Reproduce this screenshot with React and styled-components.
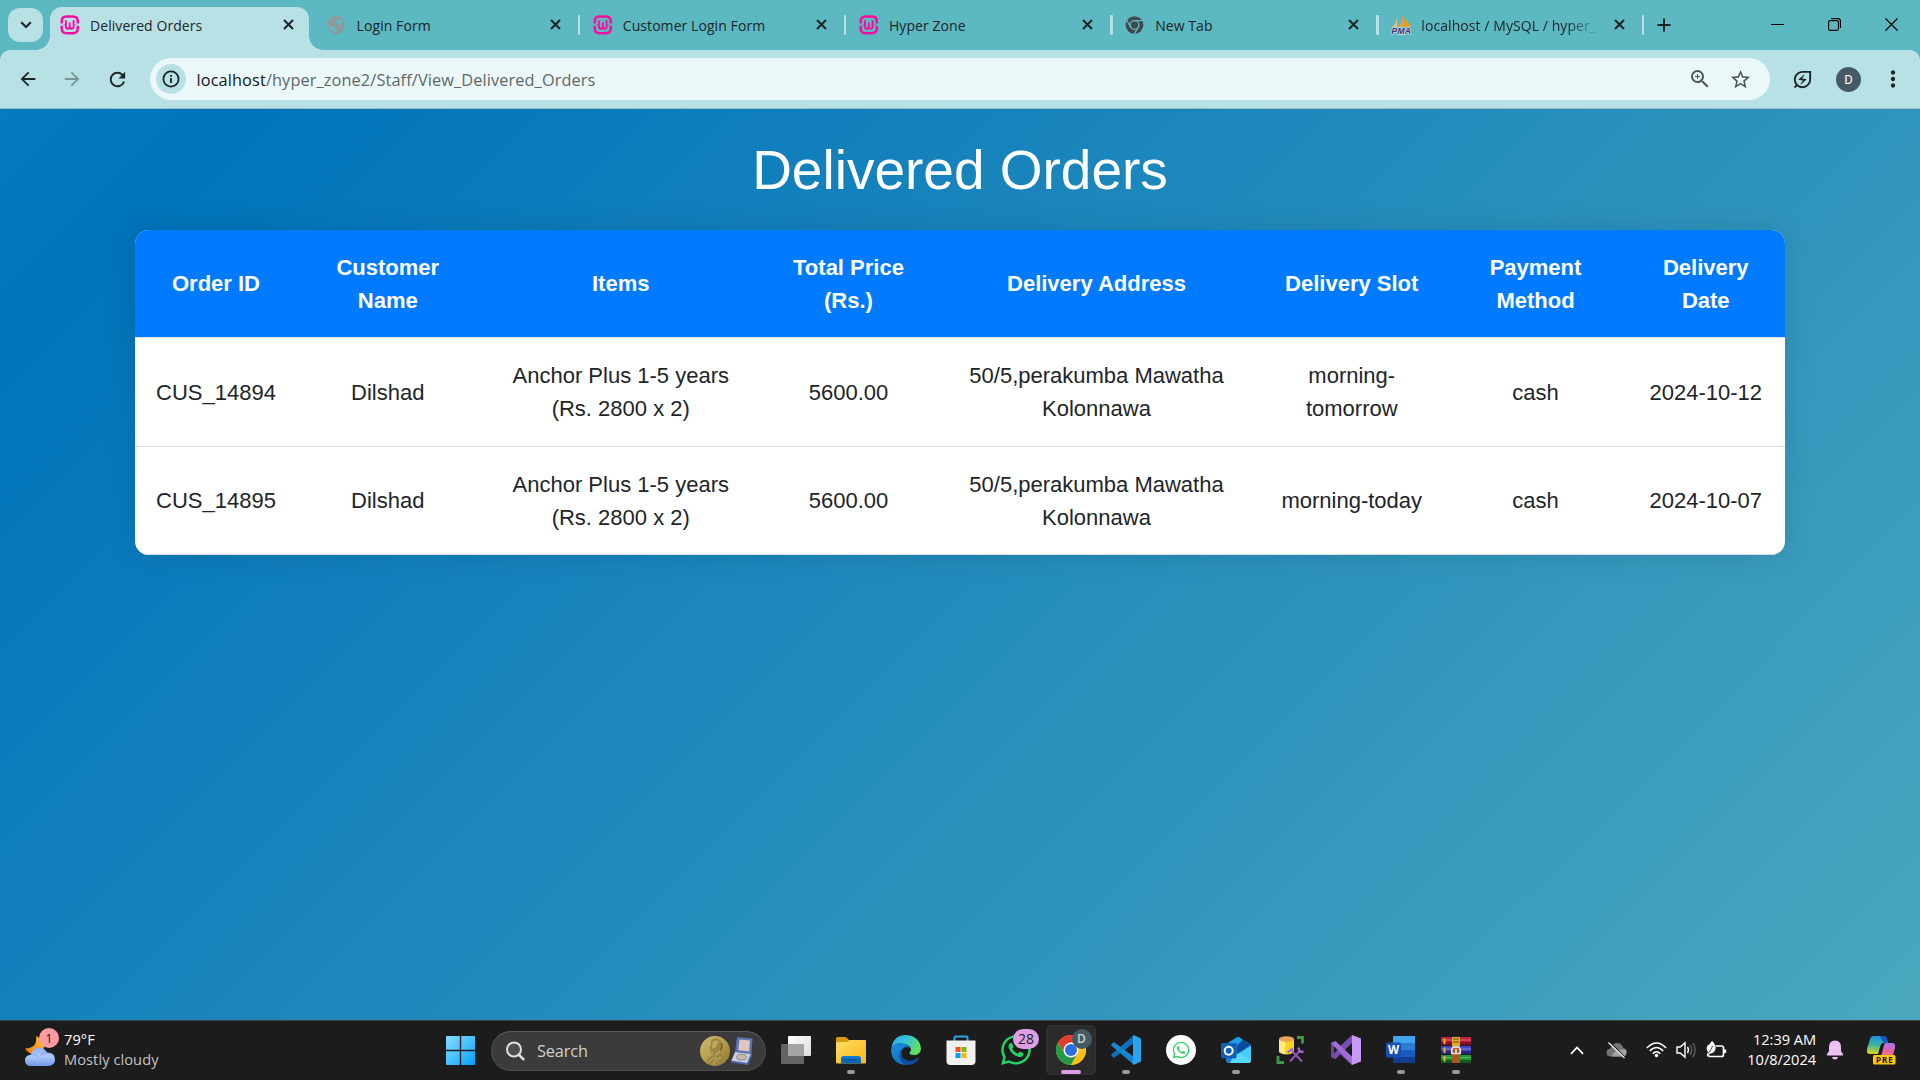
import React from "react";
import styled, { createGlobalStyle, css } from "styled-components";
import {
  MdArrowBack,
  MdArrowForward,
  MdRefresh,
  MdZoomIn,
  MdStarBorder,
  MdMoreVert,
  MdOutlineEnergySavingsLeaf,
} from "react-icons/md";
import { FaWhatsapp } from "react-icons/fa";

const strip = "#5cb8c1";
const bar = "#b8e1e5";
const ink = "#1d2426";

const Global = createGlobalStyle`
  *, *::before, *::after { box-sizing: border-box; }
  html, body { margin: 0; padding: 0; overflow: hidden; }
  svg { display: block; flex: none; }
`;

const Screen = styled.div`
  width: 1920px;
  height: 1080px;
  display: flex;
  flex-direction: column;
  overflow: hidden;
  font-family: "Open Sans", "Noto Sans", sans-serif;
`;

/* ---------- browser tab strip ---------- */

const TabStrip = styled.div`
  height: 50px;
  flex: none;
  display: flex;
  align-items: flex-start;
  background: ${strip};
`;

const TabSearch = styled.div`
  width: 35px;
  height: 34px;
  margin: 8px 3px 0 8px;
  border-radius: 12px;
  background: ${bar};
  display: flex;
  align-items: center;
  justify-content: center;
`;

const Tab = styled.div`
  position: relative;
  width: ${(p) => p.$width || 266.2}px;
  height: 50px;
  padding-left: 14px;
  display: flex;
  align-items: center;
  flex: none;
  ${(p) =>
    p.$active &&
    css`
      &::before {
        content: "";
        position: absolute;
        left: 4px;
        right: 4px;
        top: 7px;
        bottom: 0;
        background: ${bar};
        border-radius: 12px 12px 0 0;
      }
      &::after {
        content: "";
        position: absolute;
        left: -10px;
        right: -10px;
        bottom: 0;
        height: 14px;
        background:
          radial-gradient(circle at 0 0, transparent 13.5px, ${bar} 14px) left / 14px 14px no-repeat,
          radial-gradient(circle at 100% 0, transparent 13.5px, ${bar} 14px) right / 14px 14px no-repeat;
      }
    `}
`;

const TabBody = styled.div`
  position: relative;
  z-index: 1;
  display: flex;
  align-items: center;
  width: 100%;
  height: 36px;
  margin-bottom: 1px;
`;

const Favicon = styled.div`
  width: 20px;
  margin-right: 10px;
  display: flex;
  align-items: center;
`;

const TabTitle = styled.div`
  width: 176px;
  overflow: hidden;
  white-space: nowrap;
  font-size: 14px;
  line-height: 22px;
  letter-spacing: 0.07px;
  color: ${ink};
  margin-top: 3px;
  ${(p) => p.$fade && css`mask-image: linear-gradient(90deg, #000 146px, transparent 178px);`}
`;

const TabClose = styled.div`
  width: 20px;
  margin-left: 12.5px;
  display: flex;
  justify-content: center;
`;

const TabRule = styled.div`
  width: 2.5px;
  height: 20px;
  border-radius: 1px;
  background: ${bar};
  margin-left: auto;
  margin-right: -1.5px;
  flex: none;
`;

const NewTab = styled.div`
  width: 42px;
  height: 49px;
  display: flex;
  align-items: center;
  justify-content: center;
`;

const WindowControls = styled.div`
  margin-left: auto;
  width: 171px;
  height: 49px;
  display: flex;
  align-items: center;
`;

const WindowButton = styled.div`
  width: 57px;
  display: flex;
  justify-content: center;
`;

/* ---------- browser toolbar ---------- */

const ToolbarBack = styled.div`
  flex: none;
  background: ${strip};
`;

const Toolbar = styled.div`
  height: 59px;
  padding-left: 17px;
  border-bottom: 1px solid #9bbcc3;
  border-radius: 10px 10px 0 0;
  background: ${bar};
  display: flex;
  align-items: center;
`;

const NavButton = styled.div`
  width: 22px;
  margin-right: ${(p) => p.$gap || 0}px;
  display: flex;
  color: ${ink};
  opacity: ${(p) => (p.$dim ? 0.4 : 1)};
`;

const Omnibox = styled.div`
  width: 1620px;
  height: 42px;
  border-radius: 21px;
  padding: 0 18.5px 0 6px;
  background: #ebf7f8;
  display: flex;
  align-items: center;
  flex: none;
`;

const SiteInfo = styled.div`
  width: 30px;
  height: 30px;
  border-radius: 50%;
  background: ${bar};
  display: flex;
  align-items: center;
  justify-content: center;
`;

const Url = styled.div`
  margin-left: 10.5px;
  font-size: 16.3px;
  line-height: 24px;
  letter-spacing: 0.13px;
  color: #5d6769;
  flex: 1;
  margin-top: 1px;
  b {
    font-weight: 400;
    color: #10181a;
  }
`;

const OmniIcon = styled.div`
  display: flex;
  margin-left: ${(p) => p.$gap || 0}px;
  color: #4b5658;
`;

const ToolIcon = styled.div`
  display: flex;
  margin-left: ${(p) => p.$gap}px;
  color: ${ink};
`;

const Avatar = styled.div`
  width: 25px;
  height: 25px;
  margin-left: 22px;
  border-radius: 50%;
  background: #455a64;
  color: #fff;
  font: 400 13px/25px Roboto, sans-serif;
  text-align: center;
`;

/* ---------- page ---------- */

const Page = styled.main`
  flex: 1;
  padding-top: 27.5px;
  background: linear-gradient(135deg, #067bbf, #0073bb 8%, #4aa7bd);
  font-family: "Liberation Sans", Arial, sans-serif;
`;

const Container = styled.div`
  width: 1650px;
  margin: 0 auto;
`;

const Heading = styled.h1`
  margin: 0 0 27.5px;
  font-size: 55px;
  font-weight: 400;
  line-height: 66px;
  text-align: center;
  color: #fff;
`;

const Card = styled.div`
  border-radius: 13.75px;
  overflow: hidden;
  background: #fff;
  box-shadow: 0 0 30px rgba(0, 0, 0, 0.11);
`;

const Table = styled.table`
  width: 1650px;
  table-layout: fixed;
  border-collapse: separate;
  border-spacing: 0;
  font-size: 22px;
  line-height: 33px;
  text-align: center;
  color: #212529;
  th,
  td {
    padding: 20.5px 20px 20.5px 21px;
    border-bottom: 1px solid #ddd;
    vertical-align: middle;
  }
  th {
    background: #007bff;
    color: #fff;
    font-weight: 700;
  }
  tbody tr:first-child td {
    padding-top: 21px;
    padding-bottom: 21px;
  }
`;

const Col = styled.col`
  width: ${(p) => p.$w}px;
`;

/* ---------- taskbar ---------- */

const Taskbar = styled.footer`
  height: 60px;
  flex: none;
  display: flex;
  align-items: center;
  background: #1c1c1c;
  border-top: 1px solid #3f4345;
`;

const Weather = styled.div`
  width: 446px;
  height: 59px;
  padding-left: 24px;
  display: flex;
  align-items: center;
`;

const WeatherIcon = styled.div`
  position: relative;
  width: 40px;
  height: 44px;
`;

const Count = styled.div`
  position: absolute;
  left: ${(p) => p.$x}px;
  top: ${(p) => p.$y}px;
  width: ${(p) => p.$w || 20}px;
  height: 20px;
  border-radius: 10px;
  background: ${(p) => p.$bg};
  color: ${(p) => p.$fg || "#1c1c1c"};
  font-size: ${(p) => p.$size || 13}px;
  font-weight: ${(p) => p.$weight || 400};
  line-height: 20px;
  text-align: center;
`;

const Lines = styled.div`
  font-size: 14.6px;
  line-height: 20px;
  letter-spacing: ${(p) => p.$ls || 0}px;
  margin-bottom: 3px;
  color: #fff;
  white-space: nowrap;
  text-align: ${(p) => p.$align || "left"};
  span {
    display: block;
  }
`;

const Muted = styled.span`
  color: #c3c3c3;
`;

const SearchBox = styled.div`
  width: 275px;
  height: 40px;
  margin: 0 2px 0 16px;
  padding: 0 12px 0 14px;
  border-radius: 20px;
  background: #3b3b3b;
  border: 1px solid #4c4c4c;
  border-top-color: #5d5d5d;
  display: flex;
  align-items: center;
`;

const SearchLabel = styled.div`
  flex: 1;
  margin-left: 12px;
  font-size: 16.3px;
  letter-spacing: -0.1px;
  color: #d0d0d0;
`;

const AppSlot = styled.div`
  position: relative;
  width: 55px;
  height: 59px;
  display: flex;
  align-items: center;
  justify-content: center;
  flex: none;
`;

const AppTile = styled.div`
  width: 50px;
  height: 50px;
  margin-bottom: 1px;
  border-radius: 5px;
  display: flex;
  align-items: center;
  justify-content: center;
  ${(p) =>
    p.$active &&
    css`
      background: #2b2b2b;
      border: 1px solid #333;
    `}
`;

const Running = styled.div`
  position: absolute;
  bottom: 6px;
  width: ${(p) => (p.$active ? 20 : 8)}px;
  height: 4px;
  border-radius: 2px;
  background: ${(p) => (p.$active ? "#dc9fe6" : "#989898")};
`;

const Tray = styled.div`
  margin-left: auto;
  height: 58px;
  margin-bottom: 1px;
  padding-right: 24px;
  display: flex;
  align-items: center;
`;

const TrayItem = styled.div`
  display: flex;
  margin-left: ${(p) => p.$gap || 0}px;
`;

/* ---------- icons ---------- */

const Wamp = () => (
  <svg width="20" height="20" viewBox="0 0 20 20" fill="none" stroke="#ff0a9e">
    <path d="M1.700 8.600V6.500Q1.700 1.500 6.500 1.500H13Q17.800 1.500 17.800 6.500V8.600M1.700 10.800V13.300Q1.700 18.200 6.500 18.200H13Q17.800 18.200 17.800 13.300V10.800" strokeWidth="2.500" />
    <path d="M5.900 5.300V11.500Q5.900 13.700 7.900 13.700Q9.750 13.700 9.750 11.500V7.500M9.750 11.500Q9.750 13.700 11.700 13.700Q13.600 13.700 13.600 11.500V5.300" strokeWidth="1.900" />
    <path d="M3 9.700H5M14.500 9.700H16.500" strokeWidth="1" opacity=".5" />
  </svg>
);

const Globe = () => (
  <svg width="19" height="20" viewBox="0 0 19 20">
    <circle cx="9" cy="10" r="8" fill="none" stroke="#91989c" strokeWidth="1.800" />
    <path d="M2 8Q4 2.500 10 2Q13 3.500 11 5.500Q8 5.500 8.500 8Q11 8 12.500 9.500Q14 11 16.500 10.500Q16 16 10 17.500Q8 17 10 14.500Q10 12.500 7 12.500Q5 10 2 10Z" fill="#91989c" />
  </svg>
);

const ChromeMono = () => (
  <svg width="19" height="20" viewBox="0 0 20 20">
    <circle cx="10" cy="10" r="9.300" fill="#41484c" />
    <circle cx="10" cy="10" r="4.600" fill="none" stroke={strip} strokeWidth="1.500" />
    <path d="M10 5.400H18.300M6 12.300L1.800 5M14 12.300L9.800 19.400" stroke={strip} strokeWidth="1.400" />
  </svg>
);

const Pma = () => (
  <svg width="21" height="21" viewBox="0 0 21 21">
    <path d="M6 2Q6 9 1 14Q4 12.500 6.200 13.500Z" fill="#fbbf6b" />
    <path d="M11.500 0Q12 9 7 13.500L13 13Z" fill="#f9a13a" />
    <path d="M12.500 1.500Q13.500 8 13.500 13L20 13Q16.500 9 16.500 4.500Q16 8 15.500 8Q13.500 5 12.500 1.500Z" fill="#f89c0e" />
    <text x="0.500" y="20.300" textLength="19.500" fontFamily="Liberation Sans" fontWeight="700" fontStyle="italic" fontSize="8.500" fill="#34346e" stroke="#c6dbe5" strokeWidth="1.400" paintOrder="stroke">PMA</text>
  </svg>
);

const CloseGlyph = () => (
  <svg width="11" height="11" viewBox="0 0 11 11" stroke={ink} strokeWidth="2">
    <path d="M1 1L10 10M10 1L1 10" />
  </svg>
);

const InfoGlyph = () => (
  <svg width="18" height="18" viewBox="0 0 18 18" fill="none" stroke={ink}>
    <circle cx="9" cy="9" r="7.600" strokeWidth="1.800" />
    <path d="M9 8V13M9 5V6.800" strokeWidth="1.800" />
  </svg>
);

const WeatherGlyph = () => (
  <svg width="32" height="44" viewBox="0 0 32 44">
    <defs>
      <linearGradient id="wc" x1="0" y1="0" x2="0" y2="1">
        <stop offset="0" stopColor="#8fb0f2" />
        <stop offset=".5" stopColor="#abcafb" />
        <stop offset="1" stopColor="#6f97e6" />
      </linearGradient>
      <linearGradient id="wm" x1="0" y1="1" x2="1" y2="0">
        <stop offset="0" stopColor="#f2760e" />
        <stop offset="1" stopColor="#fbc62d" />
      </linearGradient>
    </defs>
    <path d="M12 7Q14 19 1 19.500Q6 27 14 25Q22 21 20 12Z" fill="url(#wm)" />
    <path d="M7 37Q1 37 1 31Q1 26.500 7 25.500Q9 18.500 15 18.500Q20 18.500 23 23.500Q31 23.500 31 30.500Q31 37 24 37Z" fill="url(#wc)" />
    <path d="M7 25.500Q12 24.500 14 28.500M23 23.500Q19 23.500 17 26.500" fill="none" stroke="#7fa5ec" strokeWidth="1.400" opacity=".6" />
  </svg>
);

const StartGlyph = () => (
  <svg width="29" height="29" viewBox="0 0 29 29">
    <defs>
      <linearGradient id="st" x1="0" y1="0" x2="1" y2="1">
        <stop offset="0" stopColor="#86dcfd" />
        <stop offset=".5" stopColor="#45c3fd" />
        <stop offset="1" stopColor="#079bfb" />
      </linearGradient>
    </defs>
    <path d="M1 0H13.800V13.800H0V1Q0 0 1 0ZM15.200 0H28Q29 0 29 1V13.800H15.200ZM0 15.200H13.800V29H1Q0 29 0 28ZM15.200 15.200H29V28Q29 29 28 29H15.200Z" fill="url(#st)" />
  </svg>
);

const SearchGlyph = () => (
  <svg width="19" height="20" viewBox="0 0 19 20" fill="none" stroke="#dfdfdf">
    <circle cx="8" cy="8.500" r="7" strokeWidth="2" fill="#4e4e4e" />
    <path d="M12.800 13.600L17.300 18.200" strokeWidth="2.600" strokeLinecap="round" />
  </svg>
);

const MedalGlyph = () => (
  <svg width="54" height="32" viewBox="0 0 54 32">
    <defs>
      <linearGradient id="md" x1="0" y1="0" x2="1" y2="1">
        <stop offset="0" stopColor="#cdba74" />
        <stop offset=".5" stopColor="#b79f4c" />
        <stop offset="1" stopColor="#8a7128" />
      </linearGradient>
    </defs>
    <circle cx="16" cy="16" r="15" fill="url(#md)" />
    <path d="M13 4.500Q19 1.500 22 6Q24 10 21.500 14Q21 17 23 19.500Q27 22 27.500 25Q22 31 13 30.500Q9 29 7.500 26Q9 22 14 20Q15 18 13 17.500Q10.500 17.500 11.500 14.500L10.500 13L12 10.500Q11 7 13 4.500Z" fill="#9c8640" />
    <path d="M14 6Q18 4 20 7Q18 8 17.500 11Q16 14 13 13.500Q13 9 14 6Z" fill="#bda861" />
    <path d="M16 20Q20 18.500 21.500 15M10 27Q13 22.500 17.500 22M14 30Q15 25 22 22.500" stroke="#d3c27e" strokeWidth="1" fill="none" opacity=".8" />
    <path d="M22.500 8Q24 12 21.500 15.500" stroke="#6d5a20" strokeWidth="1.400" fill="none" />
    <path d="M38 2L53.500 3.500L52.500 19L36 17Z" fill="#5a72b4" />
    <path d="M40.500 4.500L51 5.500L50.200 16.500L39.200 15.200Z" fill="#dcc8bb" />
    <path d="M36 17L52.500 19L48.500 29L32 26.500Z" fill="#ccd0e0" />
    <path d="M32 26.500L48.500 29L52.500 19" fill="none" stroke="#4f69b0" strokeWidth="1.800" />
    <ellipse cx="42.500" cy="22.200" rx="5" ry="2.800" fill="#cbb9ad" stroke="#8d8794" />
  </svg>
);

const TaskViewGlyph = () => (
  <svg width="30" height="28" viewBox="0 0 30 28">
    <defs>
      <linearGradient id="tv" x1="0" y1="0" x2="1" y2="1">
        <stop offset="0" stopColor="#fff" />
        <stop offset="1" stopColor="#dcdcdc" />
      </linearGradient>
    </defs>
    <rect x="0" y="8" width="23" height="20" rx="1" fill="#646464" />
    <rect x="7" y="0" width="23" height="20" rx="1" fill="url(#tv)" />
    <path d="M7 8H23V20H7Z" fill="#a5a5a5" />
  </svg>
);

const FolderGlyph = () => (
  <svg width="30" height="28" viewBox="0 0 30 28">
    <defs>
      <linearGradient id="fo" x1="0" y1="0" x2="1" y2="1">
        <stop offset="0" stopColor="#ffdc68" />
        <stop offset="1" stopColor="#f8b913" />
      </linearGradient>
      <linearGradient id="fb" x1="0" y1="0" x2="0" y2="1">
        <stop offset="0" stopColor="#0f7fd0" />
        <stop offset="1" stopColor="#0a62b0" />
      </linearGradient>
    </defs>
    <path d="M0 2.500Q0 1 1.500 1H9Q10.500 1 11.500 2.500L13.500 4.500H15V9H0Z" fill="#d69a0b" />
    <path d="M0 6H10Q12 6 13.500 4H29Q30 4 30 5V26Q30 27.500 28.500 27.500H1.500Q0 27.500 0 26Z" fill="url(#fo)" />
    <path d="M5 27.500V22.500Q5 20 7.500 20H22.500Q25 20 25 22.500V27.500Z" fill="url(#fb)" />
    <path d="M8.500 23.700H21.500" stroke="#0a4c92" strokeWidth="1.200" />
  </svg>
);

const EdgeGlyph = () => (
  <svg width="30" height="30" viewBox="0 0 30 30">
    <defs>
      <linearGradient id="eg" x1="0" y1="0" x2="1" y2=".5">
        <stop offset="0" stopColor="#2aa8e0" />
        <stop offset=".5" stopColor="#35c4dc" />
        <stop offset="1" stopColor="#64e05a" />
      </linearGradient>
      <linearGradient id="eb" x1="0" y1="0" x2="1" y2="1">
        <stop offset="0" stopColor="#1e90e0" />
        <stop offset="1" stopColor="#0a66b8" />
      </linearGradient>
    </defs>
    <path d="M.5 12Q3 0 15 0Q23 0 27.500 6Q30 10 30 14Q29 20 23 20Q18 20 18.500 17.500Q20 16 20 14.500Q19 9 12 9Q5 8 .5 12Z" fill="url(#eg)" />
    <path d="M.2 13Q3 7.500 10 8Q17 8.500 19 13Q14 10.500 11.500 14Q8 21 15 29.900Q6 30 2 23Q-.3 18.500 .2 13Z" fill="url(#eb)" />
    <path d="M12 13.500Q8 18 12 23Q18 28.500 27 23Q28.500 22.500 28 24Q24 30 15 30Q8 27 8.500 19Q9 15 12 13.500Z" fill="#124c9c" />
  </svg>
);

const StoreGlyph = () => (
  <svg width="30" height="30" viewBox="0 0 30 30">
    <path d="M8.500 6V2.500Q8.500 1.500 9.500 1.500H20.500Q21.500 1.500 21.500 2.500V6" fill="none" stroke="#2ba3e4" strokeWidth="2" />
    <path d="M.5 5.500H29.500V26Q29.500 30 25.500 30H4.500Q.5 30 .5 26Z" fill="#f1f1f1" />
    <path d="M9.500 12H14.500V17H9.500Z" fill="#f1511b" />
    <path d="M15.500 12H20.500V17H15.500Z" fill="#80b900" />
    <path d="M9.500 18H14.500V23H9.500Z" fill="#00a4ef" />
    <path d="M15.500 18H20.500V23H15.500Z" fill="#fbb400" />
  </svg>
);

const ChromeGlyph = () => (
  <svg width="30" height="30" viewBox="0 0 30 30">
    <circle cx="15" cy="15" r="15" fill="#fbc116" />
    <path d="M2 7.500A15 15 0 0 1 28 7.500H15L8.500 18.700Z" fill="#e33b2e" />
    <path d="M2 7.500A15 15 0 0 0 15 30L21.500 18.700H8.500Z" fill="#249a48" />
    <path d="M28 7.500H15V15L21.500 18.700L15 30A15 15 0 0 0 28 7.500Z" fill="#fbc116" />
    <circle cx="15" cy="15" r="7.500" fill="#fff" />
    <circle cx="15" cy="15" r="6" fill="#2b6fe0" />
  </svg>
);

const VsCodeGlyph = () => (
  <svg width="30" height="30" viewBox="0 0 30 30">
    <path d="M22.500 .5V8.500L3.500 22.500Q2.800 23 2 22.300L.5 20.800Q-.2 20 .5 19.200Z" fill="#0e70b8" />
    <path d="M22.500 29.500V21.500L3.500 7.500Q2.800 7 2 7.700L.5 9.200Q-.2 10 .5 10.800Z" fill="#1587cf" />
    <path d="M22 .5Q22.700 0 23.600 .4L29 3Q30 3.500 30 4.500V25.500Q30 26.500 29 27L23.600 29.600Q22.700 30 22 29.500Z" fill="#2aa5f0" />
  </svg>
);

const WhatsAppRound = () => (
  <svg width="30" height="30" viewBox="0 0 30 30">
    <circle cx="15" cy="15" r="15" fill="#fff" />
    <g transform="translate(5.500 5.500)" color="#35d366">
      <FaWhatsapp size={19} />
    </g>
  </svg>
);

const OutlookGlyph = () => (
  <svg width="30" height="30" viewBox="0 0 30 30">
    <path d="M5 9L16 2Q17 1.500 18 2L29 9Q30 9.600 30 11V25Q30 28 27 28H8Q5 28 5 25Z" fill="#1d83d4" />
    <path d="M5 10L17 2L22 5L8 14Z" fill="#1aa0e4" />
    <path d="M22 5L29.500 9.700L16 19V11Z" fill="#0b4a9c" />
    <path d="M12 22L30 11V25Q30 28 27 28H9Z" fill="#45cdf7" />
    <path d="M12 22L18 18L30 25.500Q29.500 28 27 28H9Z" fill="#63e0fb" opacity=".7" />
    <rect x="0" y="8" width="15.500" height="15.500" rx="1.500" fill="#0f5fb8" />
    <circle cx="7.700" cy="15.700" r="4" fill="none" stroke="#fff" strokeWidth="2" />
  </svg>
);

const DatabaseGlyph = () => (
  <svg width="30" height="30" viewBox="0 0 30 30">
    <path d="M3 4V17Q10 21.500 18 17.500V4Z" fill="#fbd31b" />
    <path d="M3 4V17Q5 18.800 9 19.500V5Z" fill="#ffe783" />
    <ellipse cx="10.500" cy="4" rx="7.500" ry="2.800" fill="#e9a45a" />
    <path d="M21 2.500H26.500V8.500M2 21V27.500H8" fill="none" stroke="#3f9a47" strokeWidth="2.800" />
    <path d="M14 26.500L24 15.500M16 16L26 26.500" stroke="#9455bb" strokeWidth="2" />
    <path d="M11.500 17.500L17 13.500M22.500 12.500L23.500 16.500L27.500 17" fill="none" stroke="#a768cf" strokeWidth="2.400" />
  </svg>
);

const VisualStudioGlyph = () => (
  <svg width="30" height="30" viewBox="0 0 30 30">
    <path d="M0 8L4 6.500L21 22.500V30L3 14V20L7 18.500L4.500 24L0 22Z" fill="#69429b" />
    <path d="M0 22L4.500 24L21 8V0L4 16Z" fill="#7a4db0" />
    <path d="M0 8L4.500 6L21 21.500V30Z" fill="#9d6cd6" />
    <path d="M21 0L30 3.500V26.500L21 30Z" fill="#c79af6" />
    <path d="M3 11.500V18.500L6.500 15Z" fill="#1c1c1c" />
  </svg>
);

const WordGlyph = () => (
  <svg width="30" height="28" viewBox="0 0 30 28">
    <path d="M7 1Q7 0 8 0H29V7H7Z" fill="#41a5ee" />
    <path d="M7 7H29V14H7Z" fill="#2b7cd3" />
    <path d="M7 14H29V21H7Z" fill="#185abd" />
    <path d="M7 21H29V27H8Q7 27 7 26Z" fill="#103f91" />
    <rect x="0" y="6.500" width="15" height="15" rx="1.500" fill="#1650b5" />
    <text x="7.500" y="18" textAnchor="middle" fontFamily="Open Sans" fontWeight="700" fontSize="11.500" fill="#fff">W</text>
  </svg>
);

const RarGlyph = () => (
  <svg width="30" height="26" viewBox="0 0 30 26">
    <path d="M0 0H30V8H0Z" fill="#c2223f" />
    <path d="M0 5H30V8H0Z" fill="#7e0f26" />
    <path d="M0 9H30V17H0Z" fill="#4747c4" />
    <path d="M0 14H30V17H0Z" fill="#24247c" />
    <path d="M0 18H30V25.500H0Z" fill="#1e9a3a" />
    <path d="M0 23H30V25.500H0Z" fill="#0c5a1c" />
    <path d="M1 3H30M1 12H30M1 20.500H30" stroke="#fff" strokeWidth=".7" opacity=".4" />
    <path d="M2.500 1.500H4.500V7H2.500ZM2.500 10.500H4.500V16H2.500ZM2.500 19H4.500V24.500H2.500Z" fill="#e3b52a" />
    <path d="M11 0H19V9H11Z" fill="#d9ac2e" />
    <path d="M11 9H19V26H11Z" fill="#a9591d" />
    <path d="M12 2H18M12 5H18" stroke="#6e4b12" strokeWidth="1" />
    <path d="M10.800 16.500V12.500Q10.800 9.800 15 9.800Q19.200 9.800 19.200 12.500V16.500Z" fill="none" stroke="#e6e0dc" strokeWidth="1.700" />
    <path d="M15 12V17" stroke="#f0e6d8" strokeWidth="1.500" />
  </svg>
);

const CopilotGlyph = () => (
  <svg width="30" height="30" viewBox="0 0 30 30">
    <defs>
      <linearGradient id="cl" x1=".5" y1="0" x2=".4" y2="1">
        <stop offset="0" stopColor="#1d8fe8" />
        <stop offset=".5" stopColor="#38b5a0" />
        <stop offset="1" stopColor="#d8d523" />
      </linearGradient>
      <linearGradient id="cr" x1=".6" y1="0" x2=".4" y2="1">
        <stop offset="0" stopColor="#a974ee" />
        <stop offset=".55" stopColor="#ea5fa3" />
        <stop offset="1" stopColor="#fa8a55" />
      </linearGradient>
    </defs>
    <path d="M8 1H17Q20 1 21 4L22 8H17Q15 8 14 12L12 19H4Q0 19 1 14L4 4Q5 1 8 1Z" fill="url(#cl)" />
    <path d="M14 1H17Q20 1 21 4L22 8H18Q16 6 14 1Z" fill="#1757c8" />
    <path d="M19 8H26Q30 8 29 13L27 20Q26 23 22 23H12Q15 22 16 18L18 10Z" fill="url(#cr)" />
    <rect x="7" y="20" width="22.500" height="9.500" rx="1.500" fill="#fdc80b" />
    <text x="18.200" y="27.800" textAnchor="middle" textLength="17" fontFamily="Open Sans" fontWeight="700" fontSize="8.500" fill="#1c1c1c">PRE</text>
  </svg>
);

/* ---------- data ---------- */

const tabs = [
  { title: "Delivered Orders", icon: Wamp, active: true, width: 266.6 },
  { title: "Login Form", icon: Globe, rule: true },
  { title: "Customer Login Form", icon: Wamp, rule: true },
  { title: "Hyper Zone", icon: Wamp, rule: true },
  { title: "New Tab", icon: ChromeMono, rule: true },
  { title: "localhost / MySQL / hyper_", icon: Pma, rule: true, fade: true, width: 265.2 },
];

const columns = [
  ["Order ID", 161],
  ["Customer Name", 182.5],
  ["Items", 283.5],
  ["Total Price (Rs.)", 172],
  ["Delivery Address", 324],
  ["Delivery Slot", 186.5],
  ["Payment Method", 181],
  ["Delivery Date", 159.5],
];

const orders = [
  ["CUS_14894", "Dilshad", "Anchor Plus 1-5 years (Rs. 2800 x 2)", "5600.00", "50/5,perakumba Mawatha Kolonnawa", "morning-tomorrow", "cash", "2024-10-12"],
  ["CUS_14895", "Dilshad", "Anchor Plus 1-5 years (Rs. 2800 x 2)", "5600.00", "50/5,perakumba Mawatha Kolonnawa", "morning-today", "cash", "2024-10-07"],
];

const apps = [
  { id: "taskview", icon: <TaskViewGlyph /> },
  { id: "explorer", icon: <FolderGlyph />, running: true },
  { id: "edge", icon: <EdgeGlyph /> },
  { id: "store", icon: <StoreGlyph /> },
  {
    id: "whatsapp",
    icon: <FaWhatsapp size={34} color="#25d366" />,
    badge: <Count $x={25} $y={8} $w={26} $bg="#dc9fe6" $size={14}>28</Count>,
  },
  {
    id: "chrome",
    icon: <ChromeGlyph />,
    running: true,
    active: true,
    badge: <Count $x={28.500} $y={8} $bg="#455a64" $fg="#c9d2d6" $size={12} $weight={600}>D</Count>,
  },
  { id: "vscode", icon: <VsCodeGlyph />, running: true },
  { id: "whatsapp-web", icon: <WhatsAppRound /> },
  { id: "outlook", icon: <OutlookGlyph />, running: true },
  { id: "database", icon: <DatabaseGlyph /> },
  { id: "vs", icon: <VisualStudioGlyph /> },
  { id: "word", icon: <WordGlyph />, running: true },
  { id: "rar", icon: <RarGlyph />, running: true },
];

export default function App() {
  return (
    <Screen>
      <Global />
      <TabStrip>
        <TabSearch>
          <svg width="12" height="8" viewBox="0 0 12 8" fill="none" stroke={ink} strokeWidth="2.200">
            <path d="M1.200 1.200L6 6L10.800 1.200" />
          </svg>
        </TabSearch>
        {tabs.map(({ title, icon: Icon, active, rule, fade, width }) => (
          <Tab key={title} $active={active} $width={width}>
            <TabBody>
              <Favicon>
                <Icon />
              </Favicon>
              <TabTitle $fade={fade}>{title}</TabTitle>
              <TabClose>
                <CloseGlyph />
              </TabClose>
              {rule && <TabRule />}
            </TabBody>
          </Tab>
        ))}
        <NewTab>
          <svg width="14" height="14" viewBox="0 0 14 14" stroke={ink} strokeWidth="2">
            <path d="M7 .5V13.500M.5 7H13.500" />
          </svg>
        </NewTab>
        <WindowControls>
          <WindowButton>
            <svg width="13" height="13" viewBox="0 0 13 13" stroke="#000">
              <path d="M0 6.500H13" />
            </svg>
          </WindowButton>
          <WindowButton>
            <svg width="13" height="13" viewBox="0 0 13 13" fill="none" stroke="#000" strokeWidth="1.100">
              <rect x=".6" y="2.600" width="9.800" height="9.800" rx="1.500" />
              <path d="M3 .6H10Q12.400 .6 12.400 3V10" />
            </svg>
          </WindowButton>
          <WindowButton>
            <svg width="13" height="13" viewBox="0 0 13 13" stroke="#000" strokeWidth="1.200">
              <path d="M.5 .5L12.500 12.500M12.500 .5L.5 12.500" />
            </svg>
          </WindowButton>
        </WindowControls>
      </TabStrip>

      <ToolbarBack>
        <Toolbar>
          <NavButton $gap={22}>
            <MdArrowBack size={22} />
          </NavButton>
          <NavButton $gap={23} $dim>
            <MdArrowForward size={22} />
          </NavButton>
          <NavButton $gap={22}>
            <MdRefresh size={23} />
          </NavButton>
          <Omnibox>
            <SiteInfo>
              <InfoGlyph />
            </SiteInfo>
            <Url>
              <b>localhost</b>/hyper_zone2/Staff/View_Delivered_Orders
            </Url>
            <OmniIcon>
              <MdZoomIn size={24} />
            </OmniIcon>
            <OmniIcon $gap={16.5}>
              <MdStarBorder size={23} />
            </OmniIcon>
          </Omnibox>
          <ToolIcon $gap={21}>
            <MdOutlineEnergySavingsLeaf size={23} />
          </ToolIcon>
          <Avatar>D</Avatar>
          <ToolIcon $gap={19}>
            <MdMoreVert size={26} />
          </ToolIcon>
        </Toolbar>
      </ToolbarBack>

      <Page>
        <Container>
          <Heading>Delivered Orders</Heading>
          <Card>
            <Table>
              <colgroup>
                {columns.map(([name, w]) => (
                  <Col key={name} $w={w} />
                ))}
              </colgroup>
              <thead>
                <tr>
                  {columns.map(([name]) => (
                    <th key={name}>{name}</th>
                  ))}
                </tr>
              </thead>
              <tbody>
                {orders.map((row) => (
                  <tr key={row[0]}>
                    {row.map((cell, i) => (
                      <td key={i}>{cell}</td>
                    ))}
                  </tr>
                ))}
              </tbody>
            </Table>
          </Card>
        </Container>
      </Page>

      <Taskbar>
        <Weather>
          <WeatherIcon>
            <WeatherGlyph />
            <Count $x={15} $y={-1} $bg="#ff99a4">1</Count>
          </WeatherIcon>
          <Lines $ls={0.08}>
            <span>79°F</span>
            <Muted>Mostly cloudy</Muted>
          </Lines>
        </Weather>
        <StartGlyph />
        <SearchBox>
          <SearchGlyph />
          <SearchLabel>Search</SearchLabel>
          <MedalGlyph />
        </SearchBox>
        {apps.map((app) => (
          <AppSlot key={app.id}>
            <AppTile $active={app.active}>{app.icon}</AppTile>
            {app.badge}
            {app.running && <Running $active={app.active} />}
          </AppSlot>
        ))}
        <Tray>
          <TrayItem>
            <svg width="14" height="9" viewBox="0 0 14 9" fill="none" stroke="#fff" strokeWidth="1.800">
              <path d="M1 7.800L7 1.500L13 7.800" />
            </svg>
          </TrayItem>
          <TrayItem $gap={22}>
            <svg width="21" height="18" viewBox="0 0 21 18">
              <path d="M5 15.500Q.5 15.500 .5 11.500Q.5 8 4.500 7.500Q6 2 11 2Q15.500 2 17 6.500Q20.500 7.500 20.500 11Q20.500 15.500 16 15.500Z" fill="#747474" />
              <path d="M6 15.500Q8 9 13 9Q17 8 20 9Q20.500 10 20.500 11Q20.500 15.500 16 15.500Z" fill="#a5a5a5" />
              <path d="M3.500 1.500L19 17" stroke="#1c1c1c" strokeWidth="2.200" />
              <path d="M2.500 1.500L18.500 17" stroke="#fff" strokeWidth="1.200" />
            </svg>
          </TrayItem>
          <TrayItem $gap={19}>
            <svg width="21" height="16" viewBox="0 0 21 16" fill="none" stroke="#fff" strokeWidth="1.600">
              <path d="M.8 6Q10.500 -4 20.200 6M3.800 9Q10.500 2 17.200 9M6.700 11.700Q10.500 7.800 14.300 11.700" />
              <circle cx="10.500" cy="13.500" r="1.700" fill="#fff" stroke="none" />
            </svg>
          </TrayItem>
          <TrayItem $gap={9}>
            <svg width="21" height="18" viewBox="0 0 21 18" fill="none" stroke="#fff" strokeWidth="1.400">
              <path d="M1 6H4.200L9 1.800V16.200L4.200 12H1Z" />
              <path d="M11.500 6Q13.500 9 11.500 12" />
              <path d="M14 3.800Q17.500 9 14 14.200M16.800 1.800Q21.500 9 16.800 16.200" stroke="#5e5e5e" />
            </svg>
          </TrayItem>
          <TrayItem $gap={9}>
            <svg width="21" height="18" viewBox="0 0 21 18">
              <path d="M9.500 5H15.500Q17.500 5 17.500 7V13.500Q17.500 15.500 15.500 15.500H4Q2 15.500 1.500 13.500" fill="none" stroke="#fff" strokeWidth="1.700" />
              <path d="M18 8.500H20.200V12H18Z" fill="#fff" />
              <path d="M6 0Q10 3.500 9.500 8Q8.500 12 4.500 12.500L1.500 14.500L1 13L2 11Q-.5 8 1.500 4.500Q4 3 6 0Z" fill="#fff" />
              <path d="M6.500 5Q5.500 9 2 12.500" stroke="#1c1c1c" strokeWidth=".8" fill="none" />
            </svg>
          </TrayItem>
          <TrayItem $gap={20}>
            <Lines $align="right" $ls={-0.05}>
              <span>12:39 AM</span>
              <span>10/8/2024</span>
            </Lines>
          </TrayItem>
          <TrayItem $gap={10}>
            <svg width="18" height="20" viewBox="0 0 18 20">
              <path d="M9 .5Q15 .5 15 7V11L17.200 14.500Q17.200 15.500 16.500 15.500H1.500Q.8 15.500 .8 14.500L3 11V7Q3 .5 9 .5Z" fill="#f0c0f4" />
              <path d="M6 17H12Q11.500 19.500 9 19.500Q6.500 19.500 6 17Z" fill="#f0c0f4" />
            </svg>
          </TrayItem>
          <TrayItem $gap={22}>
            <CopilotGlyph />
          </TrayItem>
        </Tray>
      </Taskbar>
    </Screen>
  );
}
